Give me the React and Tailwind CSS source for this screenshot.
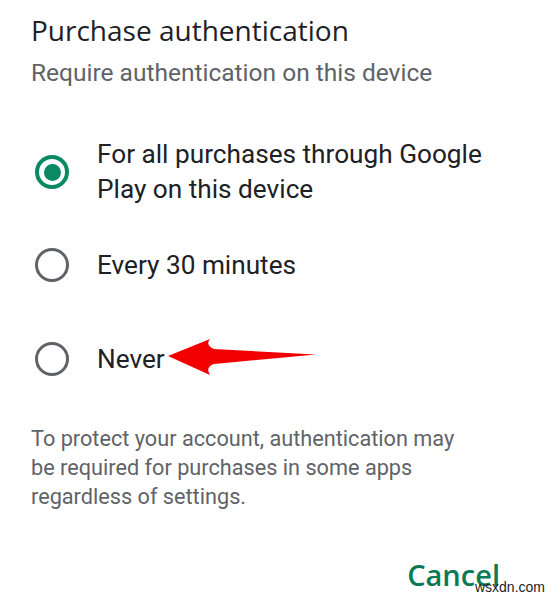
import React from "react";

function Radio({ checked }) {
  return (
    <span className="ml-[3px] flex h-[36px] w-[36px] shrink-0 items-center justify-center">
      {checked ? (
        <span className="flex h-[34px] w-[34px] items-center justify-center rounded-full border-[4px] border-[#0a8a62]">
          <span className="h-[17px] w-[17px] rounded-full bg-[#0a8a62]" />
        </span>
      ) : (
        <span className="h-[34px] w-[34px] rounded-full border-[3.5px] border-[#5f6368]" />
      )}
    </span>
  );
}

function Arrow() {
  return (
    <svg width="160" height="44" viewBox="160 334 160 44" className="absolute left-[160px] top-[334px]">
      <path
        d="M168 356 L210 339 Q205 345 214 349 L316 354.5 L214 364 Q205 367 210 375 Z"
        fill="#f20000"
      />
    </svg>
  );
}

export default function App() {
  const options = [
    { id: "all", label: ["For all purchases through Google", "Play on this device"], checked: true },
    { id: "30", label: ["Every 30 minutes"] },
    { id: "never", label: ["Never"] },
  ];

  return (
    <div className="relative h-[600px] w-[553px] overflow-hidden bg-white font-['Roboto',sans-serif]">
      <div className="flex flex-col pl-[31px] pr-[20px] pt-[12px]">
        <h1 className="font-['Open_Sans',sans-serif] text-[28px] leading-[36px] text-[#202124]">Purchase authentication</h1>
        <p className="mt-[9px] text-[24.5px] leading-[32px] text-[#5f6368]">Require authentication on this device</p>

        <div className="mt-[48px] flex flex-col">
          {options.map((o, i) => (
            <div
              key={o.id}
              className={`flex items-center gap-[27px] ${i === 0 ? "" : i === 1 ? "mt-[40px]" : "mt-[58px]"}`}
            >
              <Radio checked={o.checked} />
              <div className="text-[26.2px] leading-[35px] text-[#202124]">
                {o.label.map((l) => (
                  <div key={l}>{l}</div>
                ))}
              </div>
            </div>
          ))}
        </div>

        <p className="mt-[47px] w-[445px] text-[21.7px] leading-[29px] text-[#5f6368]">
          To protect your account, authentication may be required for purchases in some apps regardless of settings.
        </p>
      </div>

      <div className="absolute bottom-[10px] right-[53px] font-['Open_Sans',sans-serif] text-[29px] leading-[30px] font-semibold text-[#0a7a55]">
        Cancel
      </div>
      <div className="absolute bottom-[2px] right-[8px] font-['Liberation_Sans',sans-serif] text-[14px] text-[#222]">
        wsxdn.com
      </div>
      <Arrow />
    </div>
  );
}
